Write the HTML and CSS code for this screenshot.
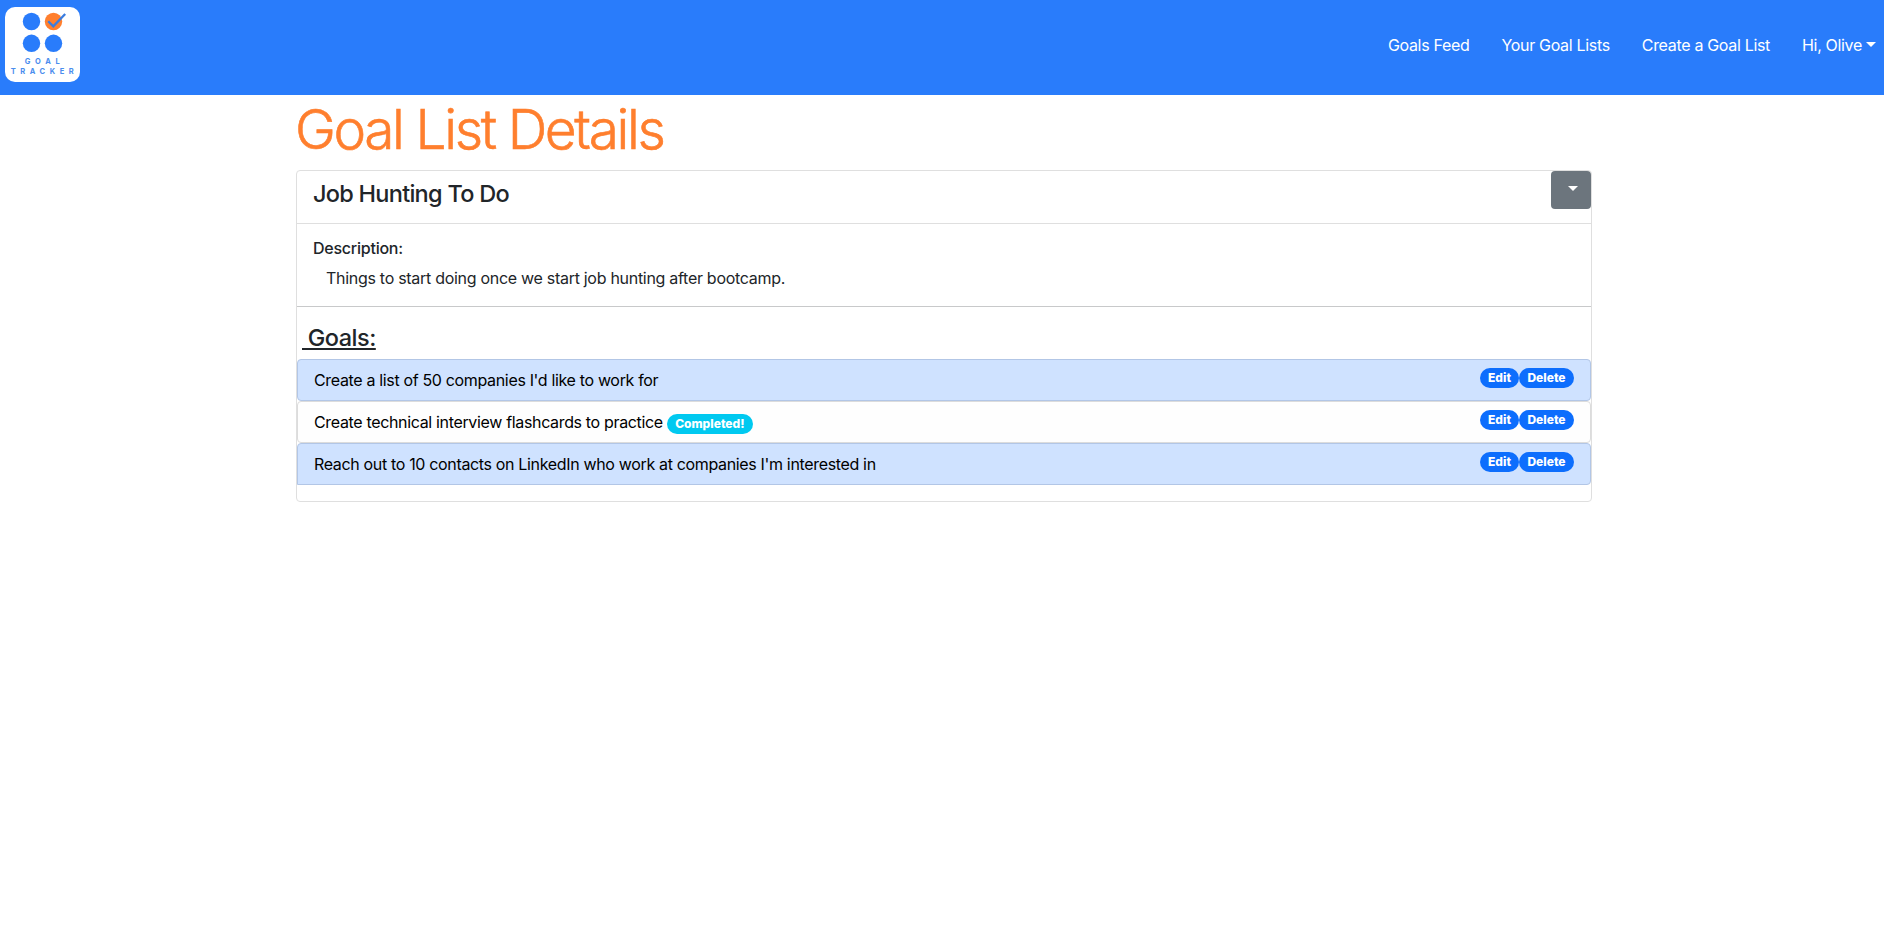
FILE: index.html
```html
<!DOCTYPE html>
<html lang="en">
<head>
<meta charset="utf-8">
<title>Goal Tracker</title>
<link rel="stylesheet" href="styles.css">
</head>
<body>
<nav class="navbar">
  <a class="brand" href="#">
    <svg width="75" height="75" viewBox="0 0 75 75" role="img" aria-label="Goal Tracker">
      <rect width="75" height="75" rx="10" fill="#fff"/>
      <g fill="#297cfb">
        <circle cx="26.5" cy="14.5" r="8.7"/>
        <circle cx="26.5" cy="36.3" r="8.7"/>
        <circle cx="48.5" cy="36.3" r="8.7"/>
      </g>
      <circle cx="48.5" cy="14.5" r="8.7" fill="#ff7f2e"/>
      <path d="M43.2 14.3L48.3 19.3L60.2 7" fill="none" stroke="#3a7de0" stroke-width="2.3"/>
      <g class="brand-text">
        <text x="19.7" y="57" textLength="35">GOAL</text>
        <text x="5.7" y="67" textLength="63">TRACKER</text>
      </g>
    </svg>
  </a>
  <div class="nav-links">
    <a class="nav-feed" href="#">Goals Feed</a>
    <a class="nav-yours" href="#">Your Goal Lists</a>
    <a class="nav-create" href="#">Create a Goal List</a>
    <a class="nav-user caret" href="#">Hi, Olive</a>
  </div>
</nav>
<main class="container">
  <h1 class="page-title">Goal List Details</h1>
  <section class="card">
    <header class="card-header">
      <h2 class="card-title">Job Hunting To Do</h2>
      <button class="menu-button caret" type="button" aria-label="Options"></button>
    </header>
    <div class="description">
      <h3 class="label">Description:</h3>
      <p class="description-text">Things to start doing once we start job hunting after bootcamp.</p>
    </div>
    <h2 class="goals-title">&nbsp;Goals:</h2>
    <ul class="goals">
      <li class="goal primary"><span class="goal-text">Create a list of 50 companies I'd like to work for</span><span class="actions"><a class="badge edit">Edit</a><a class="badge delete">Delete</a></span></li>
      <li class="goal light"><span class="goal-text">Create technical interview flashcards to practice</span><span class="badge done">Completed!</span><span class="actions"><a class="badge edit">Edit</a><a class="badge delete">Delete</a></span></li>
      <li class="goal primary"><span class="goal-text">Reach out to 10 contacts on LinkedIn who work at companies I'm interested in</span><span class="actions"><a class="badge edit">Edit</a><a class="badge delete">Delete</a></span></li>
    </ul>
  </section>
</main>
</body>
</html>
```
FILE: styles.css
```css
* { box-sizing: border-box; }
body {
  margin: 0;
  background: #fff;
  color: #212529;
  font: 16px/24px Inter, "Liberation Sans", sans-serif;
  letter-spacing: -0.29px;
}
h1, h2, h3, p, ul { margin: 0; padding: 0; }
a { color: inherit; text-decoration: none; }
.navbar {
  display: flex;
  justify-content: space-between;
  height: 95px;
  padding: 7px 8px 0 5px;
  background: #297cfb;
  color: #fff;
}
.brand svg { display: block; }
.brand-text {
  fill: #4a8dee;
  font-size: 7.5px;
  font-weight: 700;
  letter-spacing: 0;
}
.nav-links { display: flex; gap: 32px; padding-top: 26px; letter-spacing: -0.32px; white-space: nowrap; }
.caret::after {
  content: "";
  display: inline-block;
  margin-left: 4px;
  vertical-align: 4px;
  border-top: 5px solid;
  border-right: 5px solid transparent;
  border-left: 5px solid transparent;
}
.container { width: 1296px; margin-left: 296px; }
.page-title {
  height: 75px;
  color: #ff7f2e;
  font-size: 55px;
  font-weight: 300;
  line-height: 69px;
  letter-spacing: -2.4px;
  text-indent: -1px;
  white-space: nowrap;
  -webkit-text-stroke: 0.6px #ff7f2e;
}
.card { height: 332px; border: 1px solid #dfdfdf; border-radius: 4px; }
.card-header {
  display: flex;
  justify-content: space-between;
  height: 53px;
  padding-left: 16px;
  border-bottom: 1px solid #dfdfdf;
}
.card-title { padding-top: 8px; font-size: 23.5px; font-weight: 550; line-height: 29px; letter-spacing: -0.73px; }
.menu-button {
  width: 40px;
  height: 38px;
  padding: 1px 1px 0 0;
  border: 0;
  border-radius: 4px;
  background: #6c757d;
  color: #fff;
}
.description { height: 83px; padding: 14px 16px 0; border-bottom: 1px solid #c8c9ca; }
.label { font-size: 16px; font-weight: 550; line-height: 20px; letter-spacing: -0.24px; }
.description-text { padding: 8px 0 0 13px; }
.goals-title {
  height: 52px;
  padding: 16px 0 0 5px;
  font-size: 23.5px;
  font-weight: 500;
  line-height: 29px;
  letter-spacing: -0.5px;
  text-decoration: underline;
  text-decoration-thickness: 2px;
  text-underline-offset: 2px;
}
.goals { list-style: none; color: #000; }
.goal {
  display: flex;
  height: 42px;
  padding: 8px 16px 0;
  border: 1px solid;
  border-radius: 4px;
  letter-spacing: -0.34px;
}
.goal.primary { background: #cfe2ff; border-color: #b2c6e6; }
.goal.light { background: #fefefe; border-color: #dcdcdc; }
.goal:last-child { border-bottom-left-radius: 0; }
.actions { display: flex; margin-left: auto; }
.badge {
  height: 20px;
  border-radius: 10px;
  background: #0d6efd;
  color: #fff;
  font-size: 12px;
  font-weight: 800;
  line-height: 19px;
  letter-spacing: 0;
  text-align: center;
}
.edit { width: 39px; }
.delete { width: 55px; }
.done { width: 86px; margin: 4px 0 0 4px; background: #00c9f0; }
```
